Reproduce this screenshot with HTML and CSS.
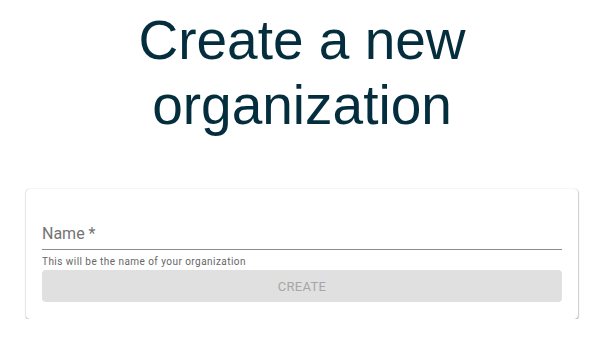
FILE: index.html
```html
<!DOCTYPE html>
<html lang="en">
<head>
    <meta charset="UTF-8">
    <meta name="viewport" content="width=device-width, initial-scale=1.0">
    <title>Create a new organization</title>
    <link rel="stylesheet" href="styles.css">
</head>
<body>

    <div class="page">
        <h1 class="title">Create a new organization</h1>

        <form class="card" id="org-form">
            <div class="field">
                <label class="field-label" for="org-name">Name *</label>
                <input type="text" id="org-name" class="field-input" aria-label="Name">
            </div>
            <div class="helper">This will be the name of your organization</div>
            <button type="submit" class="create-button" disabled>Create</button>
        </form>
    </div>

</body>
</html>
```

FILE: styles.css
```css
body {
    margin: 0;
    padding: 0;
    background-color: #fff;
    font-family: Roboto, "Liberation Sans", Arial, sans-serif;
}
.page {
    width: 552px;
    padding: 8px 26px 0 26px;
}
.title {
    margin: 0;
    font-family: "Liberation Sans", Arial, sans-serif;
    font-weight: normal;
    font-size: 55px;
    line-height: 65px;
    color: #042d3d;
    text-align: center;
}
.card {
    margin-top: 51px;
    padding: 16px 16px 17px 16px;
    background-color: #fff;
    border-radius: 4px;
    box-shadow: 0 0 1px rgba(0, 0, 0, 0.25), 0 1px 2px rgba(0, 0, 0, 0.28), 1px 1px 1px rgba(0, 0, 0, 0.1);
}
.field {
    position: relative;
    height: 44px;
    border-bottom: 1px solid #8c8c8c;
}
.field-label {
    position: absolute;
    left: 0;
    bottom: 6px;
    font-size: 16px;
    line-height: 19px;
    color: #737373;
}
.field-input {
    position: absolute;
    left: 0;
    bottom: 0;
    width: 100%;
    height: 25px;
    border: none;
    outline: none;
    background: transparent;
    font-size: 16px;
    padding: 0;
}
.helper {
    margin-top: 5px;
    font-size: 10px;
    line-height: 13px;
    letter-spacing: 0.45px;
    color: #666;
}
.create-button {
    display: block;
    width: 100%;
    height: 32px;
    margin-top: 2px;
    border: none;
    border-radius: 4px;
    background-color: #e0e0e0;
    color: #a6a6a6;
    font-family: Roboto, "Liberation Sans", Arial, sans-serif;
    font-size: 13px;
    letter-spacing: 0.3px;
    text-transform: uppercase;
}
```
